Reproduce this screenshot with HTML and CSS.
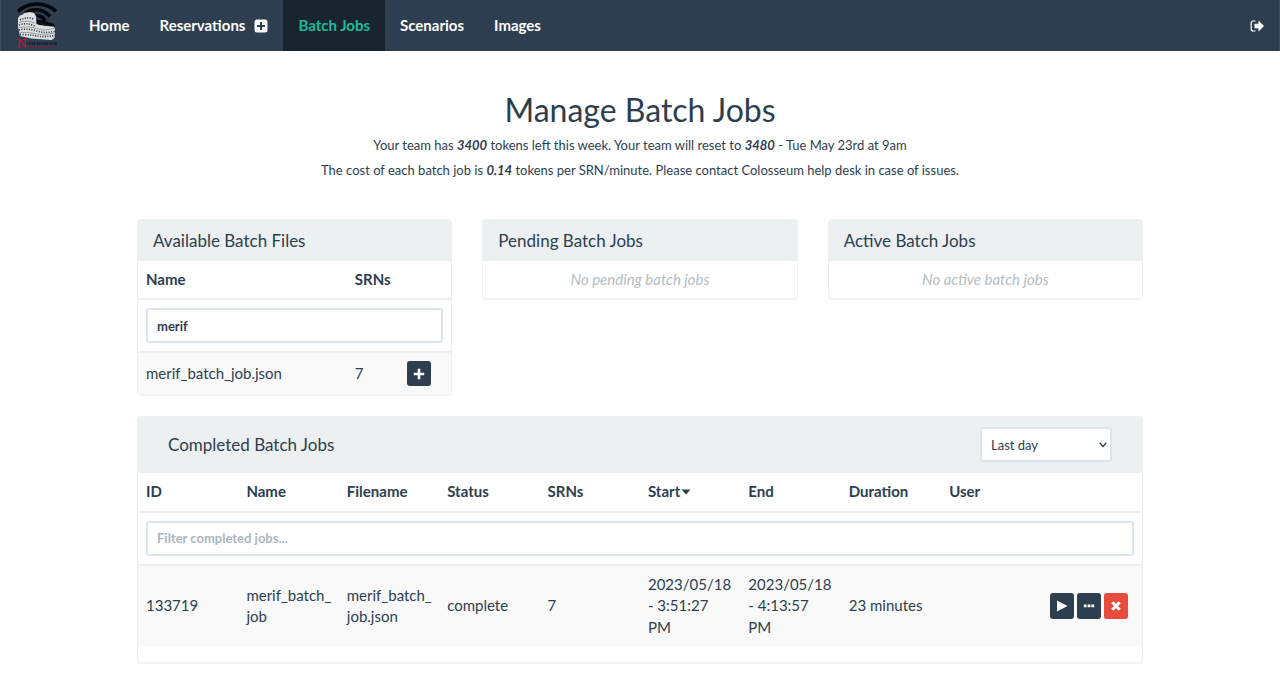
FILE: index.html
```html
<!DOCTYPE html>
<html lang="en">
<head>
<meta charset="utf-8">
<title>Manage Batch Jobs</title>
<link rel="stylesheet" href="styles.css">
</head>
<body>
<nav class="navbar">
  <a class="brand" href="#" aria-label="Colosseum">
    <svg class="logo" viewBox="0 0 40 46">
      <g fill="none" stroke="#05070a" stroke-width="3.6">
        <path d="M1 9.500C11-.5 29-.5 39 9.500"/>
        <path d="M8 11.500C14 6 26 6 33 14.500"/>
        <path d="M14 14.500C18 12 25 13 28 19"/>
      </g>
      <path fill="#05070a" d="M18 17l9 2 10 3 1 3-20-2z"/>
      <path fill="#dcdedf" d="M1 16l2-2.500 3-1 1-1.500 6-1 4 1 2 3 .5 8 3 1 5 .5 9 1 1.500 2-.5 9.500-3 2L14 36.500 3 34 1 25z"/>
      <g fill="none" stroke="#20272f" stroke-width="1.600" stroke-dasharray="1 1.500">
        <path d="M3 18q7-3.500 14-1"/>
        <path d="M2 23q8-3 17 1.500"/>
        <path d="M2 28q9-2 18 1t18 0"/>
        <path d="M3 32.500q9 0 17 1.500t17-.5"/>
      </g>
      <path fill="none" stroke="#6c737a" stroke-width=".6" d="M2 20.500q8-3 16 .5M2 25.500q10-2 18 1t18-.5M3 30.500q9-1 17 1.500t17-1"/>
      <path fill="#111820" d="M20 21.500l3-1.500 6 1 6 3.500-8-1z"/>
      <path fill="none" stroke="#d2122e" stroke-width="1.200" d="M2.500 45v-7.500l6 7.500v-7.500M.5 37.500h2.500M.5 45h4M6.500 37.500h3.500"/>
      <text class="logo-name" x="9" y="43">COLOSSEUM</text>
      <path stroke="#8c1c31" stroke-width="1" d="M10 44.700h28" stroke-dasharray="2 .6"/>
    </svg>
  </a>
  <a class="nav-link" href="#">Home</a>
  <a class="nav-link" href="#">Reservations
    <svg class="nav-icon" viewBox="0 0 14 14"><path fill="currentColor" fill-rule="evenodd" d="M3 .5h8A2.500 2.500 0 0 1 13.500 3v8a2.500 2.500 0 0 1-2.500 2.500H3A2.500 2.500 0 0 1 .5 11V3A2.500 2.500 0 0 1 3 .5zM6 3v3H3v2h3v3h2V8h3V6H8V3z"/></svg>
  </a>
  <a class="nav-link active" href="#" aria-current="page">Batch Jobs</a>
  <a class="nav-link" href="#">Scenarios</a>
  <a class="nav-link" href="#">Images</a>
  <a class="nav-link logout" href="#" aria-label="Log out">
    <svg class="nav-icon" viewBox="0 0 14 14"><path fill="none" stroke="currentColor" stroke-width="1.200" d="M5.500 2H3.200A2 2 0 0 0 1.200 4v6a2 2 0 0 0 2 2h2.300"/><path fill="currentColor" d="M4.500 4.800h4V1.600L14 7l-5.500 5.400V9.200h-4z"/></svg>
  </a>
</nav>

<main class="container">
  <header class="intro">
    <h1 class="title">Manage Batch Jobs</h1>
    <p class="note">Your team has <b>3400</b> tokens left this week. Your team will reset to <b>3480</b> - Tue May 23rd at 9am</p>
    <p class="note">The cost of each batch job is <b>0.14</b> tokens per SRN/minute. Please contact Colosseum help desk in case of issues.</p>
  </header>

  <div class="columns">
    <section class="panel">
      <h2 class="panel-heading">Available Batch Files</h2>
      <table class="table">
        <thead>
          <tr><th class="file-name">Name</th><th>SRNs</th><th></th></tr>
          <tr><th colspan="3"><input class="field" type="text" value="merif" aria-label="Filter batch files"></th></tr>
        </thead>
        <tbody>
          <tr><td>merif_batch_job.json</td><td>7</td><td><button class="btn" aria-label="Add"><svg class="icon" viewBox="0 0 12 12"><path stroke="currentColor" stroke-width="2.600" d="M6 .8v10.400M.8 6h10.400"/></svg></button></td></tr>
        </tbody>
      </table>
    </section>
    <section class="panel">
      <h2 class="panel-heading">Pending Batch Jobs</h2>
      <p class="empty">No pending batch jobs</p>
    </section>
    <section class="panel">
      <h2 class="panel-heading">Active Batch Jobs</h2>
      <p class="empty">No active batch jobs</p>
    </section>
  </div>

  <section class="panel completed">
    <div class="panel-heading wide">
      <h2 class="heading-text">Completed Batch Jobs</h2>
      <div class="period">
        <select class="field" aria-label="Period"><option>Last day</option></select>
        <svg class="chevron" viewBox="0 0 8 6"><path fill="none" stroke="currentColor" stroke-width="1.400" d="M.8 1L4 4.400 7.200 1"/></svg>
      </div>
    </div>
    <table class="table">
      <thead>
        <tr><th>ID</th><th>Name</th><th>Filename</th><th>Status</th><th>SRNs</th><th>Start<svg class="caret" viewBox="0 0 10 6"><path fill="currentColor" d="M.5.5h9L5 5.500z"/></svg></th><th>End</th><th>Duration</th><th>User</th><th></th></tr>
        <tr><th colspan="10"><input class="field" type="text" placeholder="Filter completed jobs..." aria-label="Filter completed jobs"></th></tr>
      </thead>
      <tbody>
        <tr>
          <td>133719</td><td>merif_batch_<wbr>job</td><td>merif_batch_<wbr>job.json</td><td>complete</td><td>7</td>
          <td>2023/05/18 - 3:51:27 PM</td><td>2023/05/18 - 4:13:57 PM</td><td>23 minutes</td><td></td>
          <td>
            <div class="actions">
              <button class="btn" aria-label="Run"><svg class="icon" viewBox="0 0 12 12"><path fill="currentColor" d="M1 .5L11.500 6 1 11.500z"/></svg></button>
              <button class="btn" aria-label="More"><svg class="icon" viewBox="0 0 12 12"><path fill="currentColor" d="M.8 4.500h2.800v2.800H.8zM4.600 4.500h2.800v2.800H4.600zM8.400 4.500h2.800v2.800H8.400z"/></svg></button>
              <button class="btn danger" aria-label="Delete"><svg class="icon" viewBox="0 0 12 12"><path stroke="currentColor" stroke-width="3" d="M2.300 2.300l7.400 7.400M9.700 2.300L2.300 9.700"/></svg></button>
            </div>
          </td>
        </tr>
      </tbody>
    </table>
  </section>
</main>
</body>
</html>
```
FILE: styles.css
```css
* {
  box-sizing: border-box;
}

body {
  margin: 0;
  background: #fff;
  color: #2c3e50;
  font: 15px/1.43 Lato, sans-serif;
}

.navbar {
  display: flex;
  align-items: stretch;
  height: 51px;
  border: solid #3b5064;
  border-width: 0 1px;
  background: #2c3e50;
}

.brand {
  display: flex;
  padding: 2px 17px 3px 16px;
}

.logo {
  width: 40px;
  height: 46px;
}

.logo-name {
  fill: #0b1118;
  font: 700 5px "Liberation Serif", serif;
}

.nav-link {
  display: flex;
  align-items: center;
  gap: 9px;
  padding: 0 15px;
  color: #fff;
  font-weight: 700;
  text-decoration: none;
}

.nav-link.active {
  background: #1a242f;
  color: #18bc9c;
}

.nav-icon {
  width: 14px;
  height: 14px;
}

.logout {
  margin-left: auto;
}

.container {
  max-width: 1036px;
  margin: 0 auto;
  padding: 41px 15px 31px;
}

.intro {
  margin-bottom: 36px;
  text-align: center;
}

.title {
  margin: 0 0 6px;
  font-size: 32px;
  font-weight: 400;
  line-height: 35px;
}

.note {
  margin: 0;
  font-size: 13px;
  line-height: 25px;
}

.note b {
  font-style: italic;
}

.columns {
  display: grid;
  grid-template-columns: repeat(3, 1fr);
  gap: 30px;
  align-items: start;
  margin-bottom: 21px;
}

.panel {
  border: 1px solid #ecf0f1;
  border-radius: 4px;
  box-shadow: 0 1px 1px rgba(0, 0, 0, 0.05);
  overflow: hidden;
}

.panel-heading {
  margin: 0;
  padding: 10px 15px;
  background: #ecf0f1;
  font-size: 17px;
  font-weight: 400;
  line-height: 21px;
}

.panel-heading.wide {
  display: flex;
  align-items: center;
  justify-content: space-between;
  padding: 10px 30px 11px;
}

.heading-text {
  margin: 0;
  font: inherit;
}

.empty {
  margin: 0;
  padding: 8px;
  color: #b4bcc2;
  font-style: italic;
  line-height: 21px;
  text-align: center;
}

.table {
  width: 100%;
  border-collapse: separate;
  border-spacing: 0;
  table-layout: fixed;
}

.table th,
.table td {
  padding: 8px;
  text-align: left;
  vertical-align: middle;
}

.table th {
  border-bottom: 2px solid #ecf0f1;
}

.table td {
  background: #f9f9f9;
}

.file-name {
  width: 66.66%;
}

.field {
  display: block;
  width: 100%;
  height: 35px;
  padding: 6px 9px;
  border: 2px solid #dce4ec;
  border-radius: 3px;
  background: #fff;
  color: #2c3e50;
  font: inherit;
  font-size: 13px;
  appearance: none;
}

.field::placeholder {
  color: #acb6c0;
  opacity: 1;
}

.period {
  position: relative;
  width: 132px;
}

.chevron {
  position: absolute;
  top: 15px;
  right: 5px;
  width: 8px;
  height: 6px;
  pointer-events: none;
}

.caret {
  width: 10px;
  height: 6px;
  margin: 0 0 2px 1px;
}

.btn {
  display: flex;
  align-items: center;
  justify-content: center;
  width: 24px;
  height: 25px;
  padding: 0;
  border: 0;
  border-radius: 3px;
  background: #2c3e50;
  color: #fff;
}

.btn.danger {
  background: #e74c3c;
}

.icon {
  width: 12px;
  height: 12px;
}

.actions {
  display: flex;
  gap: 3px;
}

.actions .btn {
  height: 26px;
}

.completed {
  padding-bottom: 16px;
}
```
